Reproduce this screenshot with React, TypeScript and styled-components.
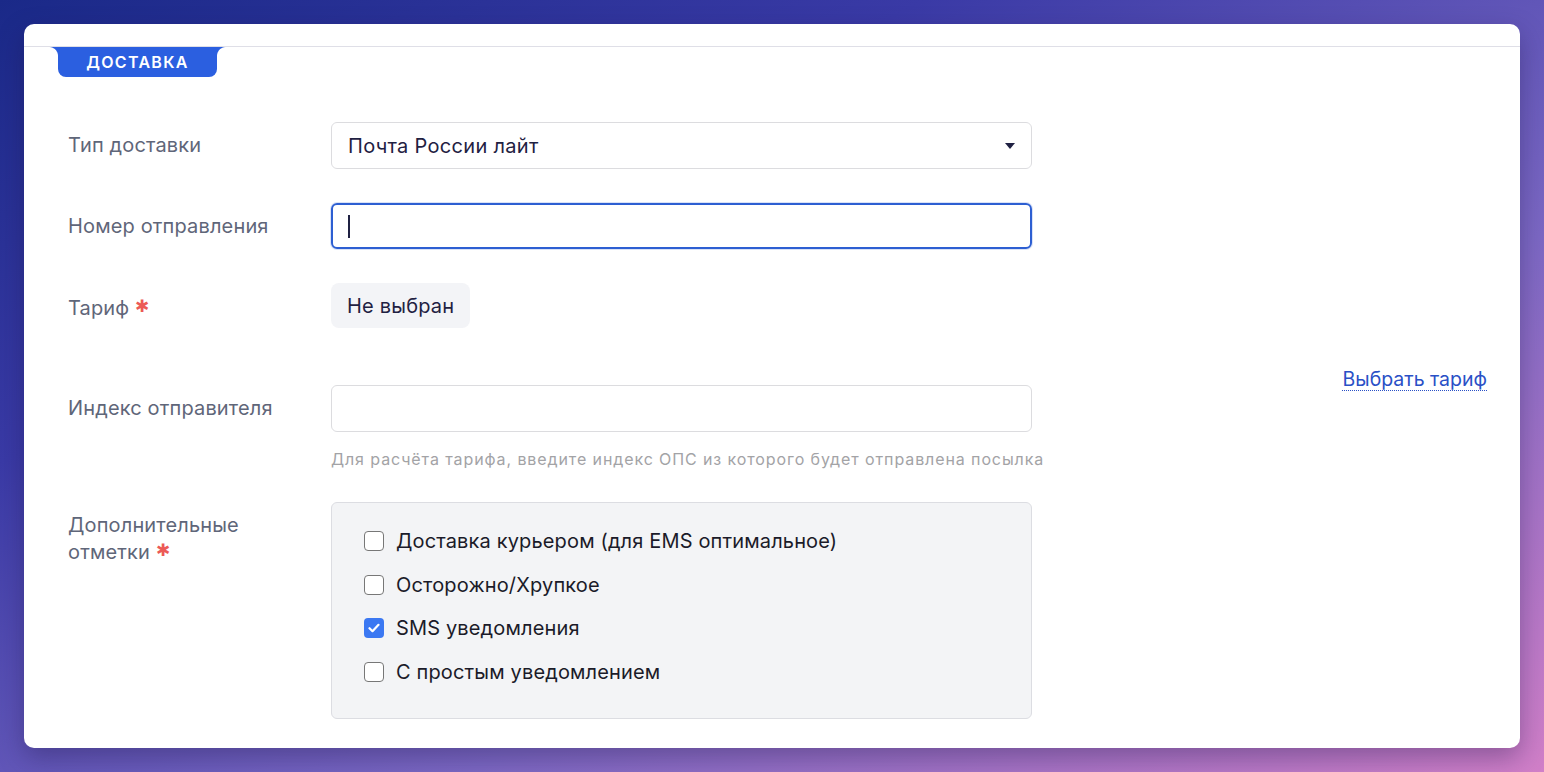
import React from 'react';
import styled, { createGlobalStyle } from 'styled-components';

const GlobalStyle = createGlobalStyle`
  html, body {
    margin: 0;
    height: 100%;
  }
  body {
    font-family: Inter, "Noto Sans", sans-serif;
    background: linear-gradient(to bottom right, #1a2988 0%, #3a3aa6 30%, #6156b8 50%, #7c68c4 65%, #d17fc8 100%);
    overflow: hidden;
  }
`;

const Page = styled.div`
  height: 772px;
  padding: 24px;
  box-sizing: border-box;
`;

const Card = styled.div`
  height: 724px;
  background: #fff;
  border-radius: 10px;
  box-shadow: 0 10px 26px rgba(30, 20, 70, 0.35);
  overflow: hidden;
`;

const CardTop = styled.div`
  height: 22px;
  border-bottom: 1px solid #dfdfe7;
`;

const Tab = styled.div`
  position: relative;
  margin-left: 34px;
  width: 159px;
  height: 30px;
  background: #2b5fe0;
  border-radius: 0 0 8px 8px;
  display: flex;
  align-items: center;
  justify-content: center;
  color: #fff;
  font-size: 16px;
  font-weight: 600;
  letter-spacing: 1.3px;
  text-transform: uppercase;

  &::before,
  &::after {
    content: '';
    position: absolute;
    top: 0;
    width: 9px;
    height: 9px;
  }
  &::before {
    left: -9px;
    background: radial-gradient(circle at 0 100%, transparent 8.5px, #2b5fe0 9.5px);
  }
  &::after {
    right: -9px;
    background: radial-gradient(circle at 100% 100%, transparent 8.5px, #2b5fe0 9.5px);
  }
`;

const Form = styled.div`
  display: grid;
  grid-template-columns: 263px 701px 1fr;
  row-gap: 34px;
  margin-top: 45px;
  padding: 0 33px 0 44px;
`;

const Label = styled.div`
  grid-column: 1;
  padding-top: 11px;
  font-size: 20px;
  line-height: 25px;
  letter-spacing: 0.15px;
  color: #5f6679;
`;

const Required = styled.span`
  color: #ec5a56;
  font-size: 17px;
  margin-left: 6px;
  vertical-align: 3px;
`;

const Field = styled.div`
  grid-column: 2;
`;

const Select = styled.div`
  height: 47px;
  box-sizing: border-box;
  border: 1px solid #dcdcdf;
  border-radius: 6px;
  display: flex;
  align-items: center;
  justify-content: space-between;
  padding: 0 16px;
  font-size: 20px;
  letter-spacing: 0.3px;
  color: #1f2142;
`;

const Input = styled.input`
  display: block;
  width: 100%;
  height: 47px;
  box-sizing: border-box;
  border: 1px solid #dcdcdf;
  border-radius: 6px;
  padding: 0 16px;
  font-family: inherit;
  font-size: 20px;
  color: #1f2142;
  outline: none;
  background: #fff;
`;

const FocusedBox = styled.div`
  height: 46px;
  box-sizing: border-box;
  border: 2px solid #2d5fd2;
  border-radius: 6px;
  box-shadow: 0 0 0 1px rgba(45, 95, 210, 0.18);
  padding: 0 15px;
  display: flex;
  align-items: center;
`;

const Caret = styled.span`
  width: 2px;
  height: 23px;
  background: #1f2142;
`;

const Chip = styled.div`
  display: inline-flex;
  align-items: center;
  height: 45px;
  padding: 0 16px;
  margin-bottom: 23px;
  border-radius: 8px;
  background: #f3f4f7;
  font-size: 20px;
  letter-spacing: 0.2px;
  color: #1f2142;
`;

const Hint = styled.div`
  margin-top: 18px;
  font-size: 16px;
  line-height: 18px;
  letter-spacing: 0.9px;
  white-space: nowrap;
  color: #a3a3a6;
`;

const Side = styled.div`
  grid-column: 3;
  grid-row: 3 / span 2;
  align-self: center;
  justify-self: end;
  padding-top: 7px;
`;

const Link = styled.a`
  font-size: 19.5px;
  color: #2a50c6;
  text-decoration: underline dotted;
  text-underline-offset: 4px;
  text-decoration-thickness: 1px;
  cursor: pointer;
`;

const Options = styled.div`
  box-sizing: border-box;
  height: 217px;
  border: 1px solid #dcdde2;
  border-radius: 6px;
  background: #f3f4f6;
  padding: 27px 32px;
  display: flex;
  flex-direction: column;
  gap: 21.5px;
`;

const Option = styled.label`
  display: flex;
  align-items: center;
  gap: 12px;
  font-size: 20px;
  line-height: 22px;
  letter-spacing: 0.15px;
  color: #1b1b29;
`;

const Box = styled.span<{ $checked?: boolean }>`
  width: 20px;
  height: 20px;
  box-sizing: border-box;
  border-radius: 4px;
  border: ${(p) => (p.$checked ? 'none' : '1.5px solid #777')};
  background: ${(p) => (p.$checked ? '#3b78f2' : '#fff')};
  display: flex;
  align-items: center;
  justify-content: center;
  flex: none;
`;

const options = [
  { text: 'Доставка курьером (для EMS оптимальное)', checked: false },
  { text: 'Осторожно/Хрупкое', checked: false },
  { text: 'SMS уведомления', checked: true },
  { text: 'С простым уведомлением', checked: false },
];

const App: React.FC = () => {
  return (
    <Page>
      <GlobalStyle />
      <Card>
        <CardTop />
        <Tab>Доставка</Tab>
        <Form>
          <Label>Тип доставки</Label>
          <Field>
            <Select>
              <span>Почта России лайт</span>
              <svg width="10" height="6" viewBox="0 0 10 6">
                <path d="M0 0h10L5 6z" fill="#1f2142" />
              </svg>
            </Select>
          </Field>

          <Label>Номер отправления</Label>
          <Field>
            <FocusedBox>
              <Caret />
            </FocusedBox>
          </Field>

          <Label>
            Тариф<Required>✱</Required>
          </Label>
          <Field>
            <Chip>Не выбран</Chip>
          </Field>
          <Side>
            <Link>Выбрать тариф</Link>
          </Side>

          <Label>Индекс отправителя</Label>
          <Field>
            <Input />
            <Hint>Для расчёта тарифа, введите индекс ОПС из которого будет отправлена посылка</Hint>
          </Field>

          <Label>
            Дополнительные
            <br />
            отметки<Required>✱</Required>
          </Label>
          <Field>
            <Options>
              {options.map((o) => (
                <Option key={o.text}>
                  <Box $checked={o.checked}>
                    {o.checked && (
                      <svg width="12" height="10" viewBox="0 0 12 10">
                        <path d="M1.5 5.2l3 3L10.5 1.8" stroke="#fff" strokeWidth="2.2" fill="none" strokeLinecap="round" strokeLinejoin="round" />
                      </svg>
                    )}
                  </Box>
                  {o.text}
                </Option>
              ))}
            </Options>
          </Field>
        </Form>
      </Card>
    </Page>
  );
};

export default App;
